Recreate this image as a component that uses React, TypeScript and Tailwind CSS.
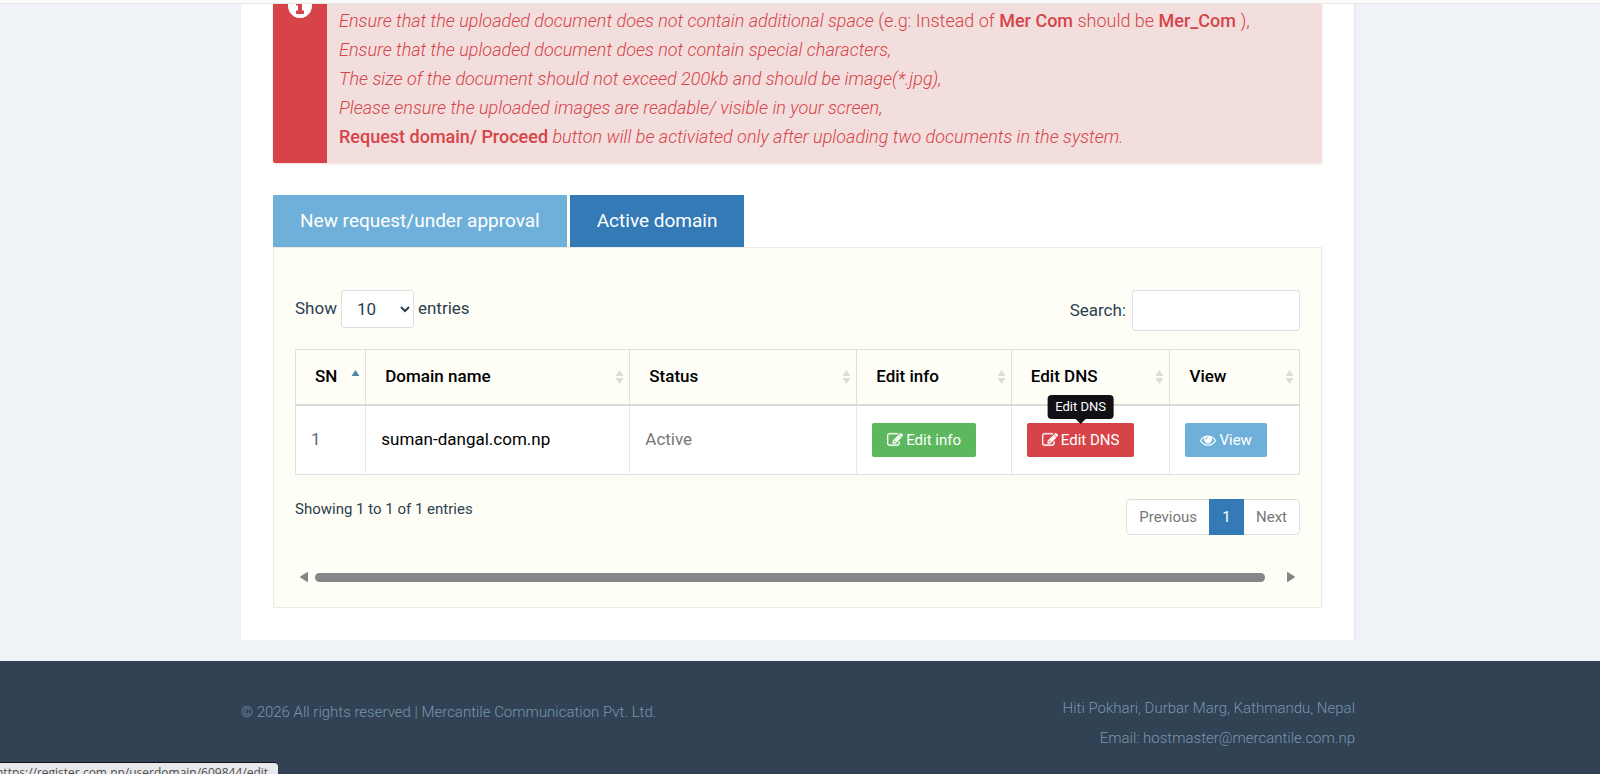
import { useState } from "react";

interface Domain {
  id: number;
  name: string;
  status: string;
}

interface IconProps {
  className?: string;
}

const domains: Domain[] = [
  { id: 1, name: "suman-dangal.com.np", status: "Active" },
];

const columns = [
  { label: "SN", width: "w-[7%]" },
  { label: "Domain name", width: "w-[26.3%]" },
  { label: "Status", width: "w-[22.6%]" },
  { label: "Edit info", width: "w-[15.4%]" },
  { label: "Edit DNS", width: "w-[15.8%]" },
  { label: "View", width: "w-[12.9%]" },
];

const InfoIcon = ({ className }: IconProps) => (
  <svg viewBox="0 0 1792 1792" fill="currentColor" className={className}>
    <path d="M1152 1376v-160q0-14-9-23t-23-9h-96v-512q0-14-9-23t-23-9h-320q-14 0-23 9t-9 23v160q0 14 9 23t23 9h96v320h-96q-14 0-23 9t-9 23v160q0 14 9 23t23 9h448q14 0 23-9t9-23zm-128-896v-160q0-14-9-23t-23-9h-192q-14 0-23 9t-9 23v160q0 14 9 23t23 9h192q14 0 23-9t9-23zm640 416q0 209-103 385.5t-279.5 279.5-385.5 103-385.5-103-279.5-279.5-103-385.5 103-385.5 279.5-279.5 385.5-103 385.5 103 279.5 279.5 103 385.5z" />
  </svg>
);

const EditIcon = ({ className }: IconProps) => (
  <svg
    viewBox="0 0 1792 1792"
    fill="currentColor"
    stroke="currentColor"
    strokeWidth="40"
    className={className}
  >
    <path d="M888 1184l116-116-152-152-116 116v56h96v96h56zm440-720q-16-16-33 1l-350 350q-17 17-1 33t33-1l350-350q17-17 1-33zm80 594v190q0 119-84.5 203.5t-203.5 84.5h-832q-119 0-203.5-84.5t-84.5-203.5v-832q0-119 84.5-203.5t203.5-84.5h832q63 0 117 25 15 7 18 23 3 17-9 29l-49 49q-14 14-32 8-23-6-45-6h-832q-66 0-113 47t-47 113v832q0 66 47 113t113 47h832q66 0 113-47t47-113v-126q0-13 9-22l64-64q15-15 35-7t20 29zm-96-738l288 288-672 672h-288v-288zm444 132l-92 92-288-288 92-92q28-28 68-28t68 28l152 152q28 28 28 68t-28 68z" />
  </svg>
);

const EyeIcon = ({ className }: IconProps) => (
  <svg viewBox="0 0 1792 1792" fill="currentColor" className={className}>
    <path d="M1664 960q-152-236-381-353 61 104 61 225 0 185-131.5 316.5t-316.5 131.5-316.5-131.5-131.5-316.5q0-121 61-225-229 117-381 353 133 205 333.5 326.5t434.5 121.5 434.5-121.5 333.5-326.5zm-720-384q0-20-14-34t-34-14q-125 0-214.5 89.5t-89.5 214.5q0 20 14 34t34 14 34-14 14-34q0-86 61-147t147-61q20 0 34-14t14-34zm848 384q0 34-20 69-140 230-376.5 368.5t-499.5 138.5-499.5-139-376.5-368q-20-35-20-69t20-69q140-229 376.5-368t499.5-139 499.5 139 376.5 368q20 35 20 69z" />
  </svg>
);

const SortIcon = ({ sorted }: { sorted: boolean }) =>
  sorted ? (
    <svg viewBox="0 0 9 16" className="w-[9px] h-4">
      <path d="M4.5 1 8.5 7h-8z" fill="#4a86a8" />
    </svg>
  ) : (
    <svg viewBox="0 0 9 16" className="w-[9px] h-4">
      <path d="M4.5 1 8.5 7h-8zM4.5 15 .5 9h8z" fill="#dcdcd9" />
    </svg>
  );

export default function App() {
  const [tab, setTab] = useState<string>("active");
  const [size, setSize] = useState<string>("10");
  const [search, setSearch] = useState<string>("");

  return (
    <div className="min-h-screen flex flex-col bg-[#eff3f8] text-[#2c3e50] font-['Roboto',sans-serif] overflow-hidden">
      <div className="h-1 bg-[#fbfbfa] border-b border-[#e9e9ea]"></div>
      <main className="w-full max-w-[1118px] mx-auto pr-1">
        <div className="bg-white border-r border-[#e3e7ed] px-8 pb-8">
          <div className="flex bg-[#f3dede] text-[#d64449] rounded-b-xs overflow-hidden shadow-[0_1px_3px_#f3dede]">
            <div className="w-[54px] shrink-0 flex justify-center bg-[#d64449] text-white">
              <InfoIcon className="size-7 -mt-3" />
            </div>
            <div className="pl-3 pt-0.5 pb-3 text-lg leading-[29px] font-light">
              <p>
                <em>
                  Ensure that the uploaded document does not contain additional
                  space
                </em>{" "}
                (e.g: Instead of <b className="font-medium">Mer Com</b> should
                be <b className="font-medium">Mer_Com</b> ),
              </p>
              <p>
                <em>
                  Ensure that the uploaded document does not contain special
                  characters,
                </em>
              </p>
              <p>
                <em>
                  The size of the document should not exceed 200kb and should be
                  image(*.jpg),
                </em>
              </p>
              <p>
                <em>
                  Please ensure the uploaded images are readable/ visible in
                  your screen,
                </em>
              </p>
              <p>
                <b className="font-medium">Request domain/ Proceed</b>{" "}
                <em>
                  button will be activiated only after uploading two documents
                  in the system.
                </em>
              </p>
            </div>
          </div>

          <div className="flex gap-[3px] mt-8 text-[19px] text-white">
            <button
              className={`h-[52px] px-[27px] ${
                tab === "new" ? "bg-[#337ab7]" : "bg-[#6fb0da]"
              }`}
              onClick={() => setTab("new")}
            >
              New request/under approval
            </button>
            <button
              className={`h-[52px] px-[27px] ${
                tab === "active" ? "bg-[#337ab7]" : "bg-[#6fb0da]"
              }`}
              onClick={() => setTab("active")}
            >
              Active domain
            </button>
          </div>

          <section className="bg-[#fefef6] border border-[#ebebe4] px-[21px] pt-[42px] pb-6">
            <div className="flex justify-between items-start text-[17px]">
              <label className="flex items-center gap-1">
                Show
                <select
                  value={size}
                  onChange={(e) => setSize(e.target.value)}
                  className="w-[73px] h-[38px] bg-white border border-[#dde0e3] rounded-[3px] pl-[11px]"
                >
                  <option>10</option>
                  <option>25</option>
                  <option>50</option>
                  <option>100</option>
                </select>
                entries
              </label>
              <label className="flex items-center gap-[6px]">
                Search:
                <input
                  type="search"
                  value={search}
                  onChange={(e) => setSearch(e.target.value)}
                  className="w-[168px] h-[41px] bg-white border border-[#dde0e3] rounded-[3px] px-3 outline-none"
                />
              </label>
            </div>

            <table className="w-full table-fixed border-collapse border border-[#e0e0dd] mt-[18px] text-[17px] text-left">
              <thead>
                <tr className="h-[55px] border-b-2 border-[#d9d9d6] text-black">
                  {columns.map((column, index) => (
                    <th
                      key={column.label}
                      className={`${column.width} border-r border-[#e0e0dd] pl-[19px] pr-[5px] font-medium`}
                    >
                      <div className="flex items-center justify-between">
                        {column.label}
                        <SortIcon sorted={index === 0} />
                      </div>
                    </th>
                  ))}
                </tr>
              </thead>
              <tbody>
                {domains.map((domain) => (
                  <tr key={domain.id} className="h-[70px] bg-white">
                    <td className="border-r border-[#e8e8e8] pl-[15px] text-[#5a6b78]">
                      {domain.id}
                    </td>
                    <td className="border-r border-[#e8e8e8] pl-[15px] text-black">
                      {domain.name}
                    </td>
                    <td className="border-r border-[#e8e8e8] pl-[15px] text-[#777]">
                      {domain.status}
                    </td>
                    <td className="border-r border-[#e8e8e8] pl-[15px]">
                      <button className="flex items-center gap-[3px] h-[34px] px-[15px] bg-[#5cb85c] text-white text-[15px] rounded-xs">
                        <EditIcon className="size-4" />
                        Edit info
                      </button>
                    </td>
                    <td className="border-r border-[#e8e8e8] pl-[15px]">
                      <div className="relative w-fit">
                        <button
                          aria-describedby="dns-tip"
                          className="flex items-center gap-[3px] h-[34px] px-[15px] bg-[#d64449] text-white text-[15px] rounded-xs"
                        >
                          <EditIcon className="size-4" />
                          Edit DNS
                        </button>
                        <div
                          id="dns-tip"
                          role="tooltip"
                          className="absolute left-1/2 -translate-x-1/2 bottom-full mb-1 h-6 px-2 flex items-center bg-[#111115] text-white text-[13px] whitespace-nowrap rounded-sm"
                        >
                          Edit DNS
                          <span className="absolute top-full left-1/2 -translate-x-1/2 border-x-[5px] border-t-[5px] border-x-transparent border-t-[#111115]"></span>
                        </div>
                      </div>
                    </td>
                    <td className="pl-[15px]">
                      <button className="flex items-center gap-[3px] h-[34px] px-[15px] bg-[#6fb0da] text-white text-[15px] rounded-xs">
                        <EyeIcon className="size-4" />
                        View
                      </button>
                    </td>
                  </tr>
                ))}
              </tbody>
            </table>

            <div className="flex justify-between items-start mt-6 text-[15px] leading-5">
              <p>Showing 1 to 1 of 1 entries</p>
              <nav className="flex h-9 bg-white border border-[#dedede] rounded-sm text-[#777]">
                <button className="px-3">Previous</button>
                <button className="w-[35px] -my-px bg-[#337ab7] text-white">
                  1
                </button>
                <button className="px-3">Next</button>
              </nav>
            </div>

            <div className="flex items-center mt-9 px-[5px]">
              <svg viewBox="0 0 8 12" className="w-2 h-3" fill="#858585">
                <path d="M7 1.2Q8 .6 8 2v8q0 1.4-1 .8L.6 6.800Q-.1 6 .6 5.200z" />
              </svg>
              <div className="grow h-[9px] bg-[#868686] rounded-full ml-[7px] mr-[22px]"></div>
              <svg viewBox="0 0 8 12" className="w-2 h-3" fill="#858585">
                <path d="M1 1.200Q0 .6 0 2v8q0 1.400 1 .8L7.400 6.800Q8.100 6 7.400 5.200z" />
              </svg>
            </div>
          </section>
        </div>
      </main>

      <footer className="grow mt-[21px] bg-[#304254] text-[#7896ac] font-light text-[15px]">
        <div className="w-full max-w-[1118px] mx-auto pr-1 pt-8 flex justify-between leading-[30px]">
          <p className="pt-1">
            © 2026 All rights reserved | Mercantile Communication Pvt. Ltd.
          </p>
          <div className="text-right">
            <p>Hiti Pokhari, Durbar Marg, Kathmandu, Nepal</p>
            <p>Email: hostmaster@mercantile.com.np</p>
          </div>
        </div>
      </footer>

      <div className="fixed left-0 bottom-0 h-3 w-[278px] overflow-hidden whitespace-nowrap bg-[#e8e9eb] text-[#4c4c50] text-xs leading-5 font-['Open_Sans',sans-serif] rounded-tr-sm border-t border-[#111]">
        <span className="-ml-1">
          https://register.com.np/userdomain/609844/edit
        </span>
      </div>
    </div>
  );
}
